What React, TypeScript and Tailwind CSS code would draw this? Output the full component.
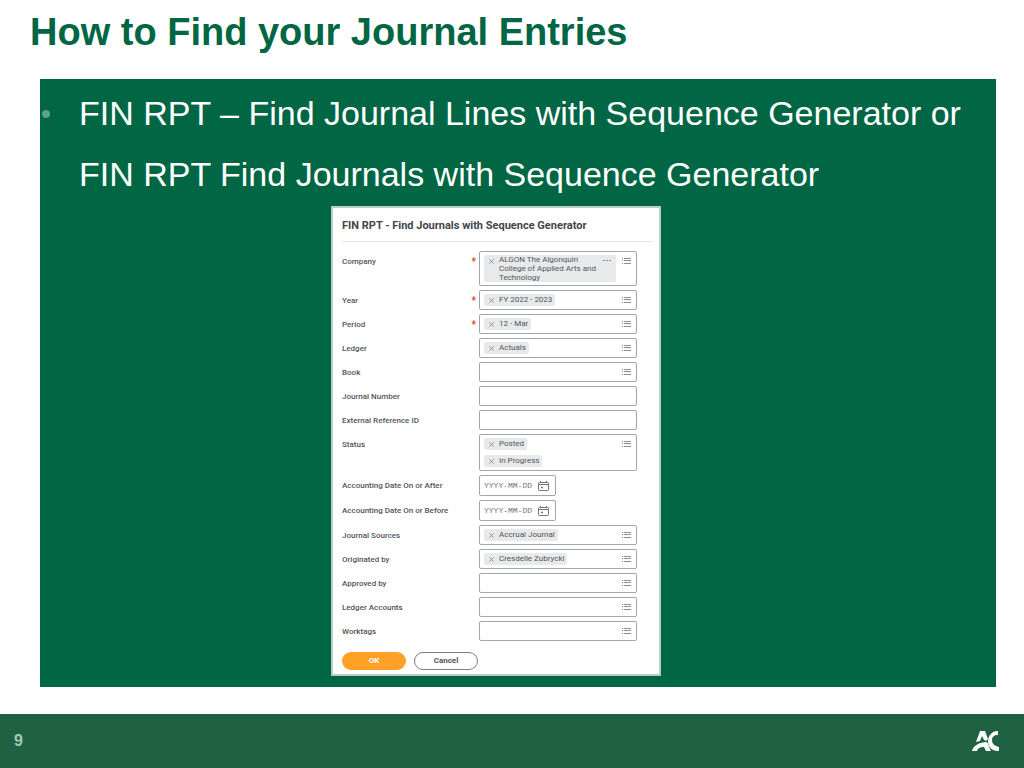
import { useState } from "react";

type Field = {
  id: string;
  label: string;
  kind: "prompt" | "text" | "date";
  required?: boolean;
  values?: string[];
};

const fields: Field[] = [
  {
    id: "company",
    label: "Company",
    kind: "prompt",
    required: true,
    values: ["ALGON The Algonquin College of Applied Arts and Technology"],
  },
  { id: "year", label: "Year", kind: "prompt", required: true, values: ["FY 2022 - 2023"] },
  { id: "period", label: "Period", kind: "prompt", required: true, values: ["12 - Mar"] },
  { id: "ledger", label: "Ledger", kind: "prompt", values: ["Actuals"] },
  { id: "book", label: "Book", kind: "prompt" },
  { id: "journal-number", label: "Journal Number", kind: "text" },
  { id: "external-reference", label: "External Reference ID", kind: "text" },
  { id: "status", label: "Status", kind: "prompt", values: ["Posted", "In Progress"] },
  { id: "date-after", label: "Accounting Date On or After", kind: "date" },
  { id: "date-before", label: "Accounting Date On or Before", kind: "date" },
  { id: "sources", label: "Journal Sources", kind: "prompt", values: ["Accrual Journal"] },
  { id: "originated", label: "Originated by", kind: "prompt", values: ["Cresdelle Zubrycki"] },
  { id: "approved", label: "Approved by", kind: "prompt" },
  { id: "ledger-accounts", label: "Ledger Accounts", kind: "prompt" },
  { id: "worktags", label: "Worktags", kind: "prompt" },
];

function ListIcon() {
  return (
    <svg viewBox="0 0 10 8" className="h-2 w-2.5" fill="#8b9096">
      <path d="M0 1h1v1H0zM2 1h7v1H2zM0 3h1v1H0zM2 3h7v1H2zM0 6h1v1H0zM2 6h7v1H2z" />
    </svg>
  );
}

function CalendarIcon() {
  return (
    <svg viewBox="0 0 11 10" className="h-2.5 w-[11px]" fill="none" stroke="#6f767d">
      <rect x="0.5" y="1.5" width="10" height="8" rx="0.8" />
      <path d="M0.5 3.5h10M2.5 0v2M8.5 0v2" />
      <path d="M3 6.5h2" strokeWidth="1.5" />
    </svg>
  );
}

function Chip({ text, onRemove }: { text: string; onRemove: () => void }) {
  const long = text.length > 30;
  return (
    <div className="flex items-start rounded-xs bg-[#e8e9eb] pr-[3px] pl-1">
      <button
        type="button"
        aria-label={`Remove ${text}`}
        onClick={onRemove}
        className="flex h-3 w-[11px] shrink-0 items-center pl-px"
      >
        <svg viewBox="0 0 5 5" className="size-[5px]" stroke="#7b8187" strokeWidth="0.8">
          <path d="M0.3 0.3l4.4 4.4M4.7 0.3L0.3 4.7" />
        </svg>
      </button>
      {long ? (
        <>
          <span className="w-[104px] text-[8px] leading-[9px]">{text}</span>
          <button type="button" aria-label="Related actions" className="flex h-3 items-center pr-0.5">
            <svg viewBox="0 0 8 2" className="h-0.5 w-2" fill="#8b9096">
              <path d="M0 0h2v1H0zM3 0h2v1H3zM6 0h2v1H6z" />
            </svg>
          </button>
        </>
      ) : (
        <span className="text-[8px] leading-3 whitespace-nowrap">{text}</span>
      )}
    </div>
  );
}

function PromptField({ field }: { field: Field }) {
  const [values, setValues] = useState(field.values ?? []);

  return (
    <div className="flex min-h-5 min-w-0 flex-1 items-start rounded-xs border border-[#a3a7ab] px-1 py-[3px]">
      <div className="flex flex-col items-start gap-[5px]">
        {values.map((v) => (
          <Chip key={v} text={v} onRemove={() => setValues(values.filter((x) => x !== v))} />
        ))}
      </div>
      <input id={field.id} type="text" className="h-3 w-0 min-w-0 flex-1 text-[8px] outline-none" />
      <button type="button" aria-label={`${field.label} list`} className="flex h-3 shrink-0 items-center">
        <ListIcon />
      </button>
    </div>
  );
}

function DateField({ id }: { id: string }) {
  return (
    <div className="flex h-[21px] w-[77px] items-center gap-1 rounded-xs border border-[#a3a7ab] px-1">
      <input
        id={id}
        type="text"
        placeholder="YYYY-MM-DD"
        className="min-w-0 flex-1 font-['Liberation_Mono',monospace] text-[8px] placeholder:text-[#6f7479] outline-none"
      />
      <button type="button" aria-label="Open calendar" className="mr-0.5">
        <CalendarIcon />
      </button>
    </div>
  );
}

function FieldRow({ field }: { field: Field }) {
  return (
    <div className="flex items-start">
      <label
        htmlFor={field.id}
        className="flex h-5 w-[137px] shrink-0 justify-between pt-px pr-[3px] text-[8px] leading-5 font-medium"
      >
        {field.label}
        {field.required && <span className="text-[10px] font-bold text-[#e0403a]">*</span>}
      </label>
      {field.kind === "prompt" && <PromptField field={field} />}
      {field.kind === "text" && (
        <input
          id={field.id}
          type="text"
          className="h-5 min-w-0 flex-1 rounded-xs border border-[#a3a7ab] px-1 text-[8px] outline-none"
        />
      )}
      {field.kind === "date" && <DateField id={field.id} />}
    </div>
  );
}

function JournalForm() {
  return (
    <form
      onSubmit={(e) => e.preventDefault()}
      className="w-[330px] border-2 border-[#b9cdc4] bg-white px-[9px] pb-1 font-[Roboto,sans-serif] text-[#50555a]"
    >
      <h2 className="mr-[-3px] border-b border-[#e6e7e8] pt-[3px] text-[11px] leading-[30px] font-bold text-[#424649]">
        FIN RPT - Find Journals with Sequence Generator
      </h2>
      <div className="flex flex-col gap-1 pt-[9px] pr-[13px]">
        {fields.map((f) => (
          <FieldRow key={f.id} field={f} />
        ))}
      </div>
      <div className="flex gap-2 pt-[11px] text-[8px] font-bold">
        <button type="submit" className="h-[18px] w-16 rounded-full bg-[#ffa126] text-white">
          OK
        </button>
        <button type="button" className="h-[18px] w-16 rounded-full border border-[#7b8085]">
          Cancel
        </button>
      </div>
    </form>
  );
}

function Logo() {
  return (
    <svg viewBox="0 0 27 21" className="h-[21px] w-[27px]" role="img" aria-label="AC" fill="#fff">
      <path d="M8 0h5l3 8-2 2-2-1-2-4-2 5-4 1z" />
      <path d="M0 20c1-5 7-9 15-9 2 3 2 6 4 9h-5l-2-4c-4 0-6 1-7 4z" />
      <path d="M26 0v4c-4 0-6 2-6 5 0 4 3 6 7 7v4c-4 0-8-1-10-5-3-7 1-15 9-15z" />
    </svg>
  );
}

export default function App() {
  return (
    <main className="flex min-h-screen flex-col bg-white font-['Liberation_Sans',sans-serif]">
      <h1 className="px-[30px] pt-1 text-[38px] leading-[56px] font-bold text-[#006644]">
        How to Find your Journal Entries
      </h1>

      <section className="mt-[19px] mr-7 mb-[27px] ml-10 flex flex-1 flex-col bg-[#006644]">
        <ul className="pt-1 text-[34px] leading-[61px] text-white">
          <li className="flex items-start">
            <span className="flex h-[61px] w-[39px] shrink-0 items-center pl-0.5">
              <span className="size-2 rounded-full bg-[#5da283]" />
            </span>
            <span>
              FIN RPT – Find Journal Lines with Sequence Generator or
              <br />
              FIN RPT Find Journals with Sequence Generator
            </span>
          </li>
        </ul>
        <div className="flex justify-center pt-px pr-11">
          <JournalForm />
        </div>
      </section>

      <footer className="flex h-[54px] items-center justify-between bg-[#1f6141] pr-[25px] pl-3.5">
        <span className="text-base font-bold text-[#a5cbb6]">9</span>
        <Logo />
      </footer>
    </main>
  );
}
